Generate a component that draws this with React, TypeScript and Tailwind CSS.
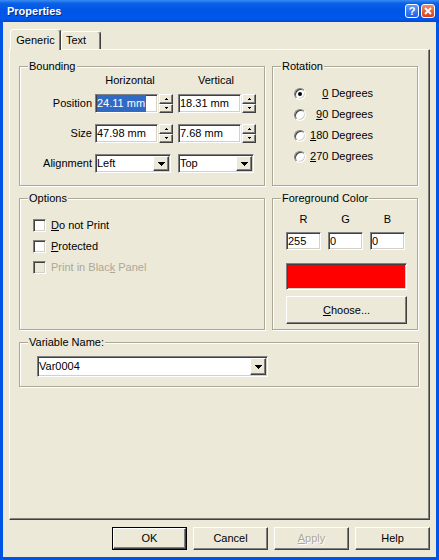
import type { ReactNode } from "react";

const raised =
	"border border-t-white border-l-white border-r-[#404040] border-b-[#404040] shadow-[inset_-1px_-1px_0_#808080]";
const sunken =
	"border border-t-[#808080] border-l-[#808080] border-r-white border-b-white shadow-[inset_1px_1px_0_#404040,inset_-1px_-1px_0_#d4d0c8]";

function Group({
	title,
	className,
	children,
}: {
	title: string;
	className: string;
	children: ReactNode;
}) {
	return (
		<div
			className={`flex flex-col border border-[#aca899] shadow-[1px_1px_0_#fff,inset_1px_1px_0_#fff] ${className}`}
		>
			<span className="-mt-[7px] ml-[8px] w-fit bg-[#ece9d8] px-[1px] leading-[13px]">
				{title}
			</span>
			{children}
		</div>
	);
}

function Arrow({ up }: { up?: boolean }) {
	return (
		<svg width="3" height="2" viewBox="0 0 3 2" shapeRendering="crispEdges">
			<path d={up ? "M1 0h1v1H1zM0 1h3v1H0z" : "M0 0h3v1H0zM1 1h1v1H1z"} fill="#000" />
		</svg>
	);
}

function DropArrow() {
	return (
		<svg width="7" height="4" viewBox="0 0 7 4" shapeRendering="crispEdges">
			<path d="M0 0h7v1H0zM1 1h5v1H1zM2 2h3v1H2zM3 3h1v1H3z" fill="#000" />
		</svg>
	);
}

function SpinField({ value, selected }: { value: string; selected?: boolean }) {
	return (
		<div className="flex h-full w-[78px]">
			<div className={`flex w-[63px] items-center bg-white pl-[1px] ${sunken}`}>
				<span className={selected ? "bg-[#316ac5] pr-[1px] text-white" : ""}>{value}</span>
			</div>
			<div className="ml-[1px] flex w-[14px] flex-col">
				<div className={`flex flex-1 items-center justify-center bg-[#ece9d8] ${raised}`}>
					<Arrow up />
				</div>
				<div className={`flex flex-1 items-center justify-center bg-[#ece9d8] ${raised}`}>
					<Arrow />
				</div>
			</div>
		</div>
	);
}

function Combo({ value, className }: { value: string; className: string }) {
	return (
		<div className={`flex bg-white p-[1px] ${sunken} ${className}`}>
			<span className="flex flex-1 items-center">{value}</span>
			<div className={`flex w-[16px] items-center justify-center bg-[#ece9d8] ${raised}`}>
				<DropArrow />
			</div>
		</div>
	);
}

function Radio({ checked, label }: { checked?: boolean; label: ReactNode }) {
	return (
		<div className="flex h-[21px] items-center">
			<div className={`flex size-[12px] items-center justify-center rounded-full bg-white ${sunken}`}>
				{checked && <div className="size-[4px] rounded-full bg-black" />}
			</div>
			<span className="w-[67px] text-right">{label}</span>
		</div>
	);
}

function Check({ label, disabled }: { label: ReactNode; disabled?: boolean }) {
	return (
		<div className="flex h-[21px] items-center">
			<div className={`size-[13px] ${disabled ? "bg-[#ece9d8]" : "bg-white"} ${sunken}`} />
			<span className={`ml-[5px] ${disabled ? "text-[#aca899]" : ""}`}>{label}</span>
		</div>
	);
}

function Button({ children, def, disabled }: { children: ReactNode; def?: boolean; disabled?: boolean }) {
	const inner = (
		<div
			className={`flex h-full w-full items-center justify-center bg-[#ece9d8] ${raised} ${
				disabled ? "text-[#aca899] [text-shadow:1px_1px_0_#fff]" : ""
			}`}
		>
			{children}
		</div>
	);
	return def ? (
		<div className="h-[23px] w-[75px] border border-black">{inner}</div>
	) : (
		<div className="h-[23px] w-[75px]">{inner}</div>
	);
}

export default function App() {
	return (
		<div className="flex h-[560px] w-[439px] flex-col bg-[#0054e3] font-['Liberation_Sans',Arial,sans-serif] text-[11px] text-black">
			{/* title bar */}
			<div className="flex h-[22px] items-center bg-[linear-gradient(to_bottom,#3b8df5_0%,#0a62e6_15%,#0055e5_45%,#0058ec_85%,#0049cf_100%)] pl-[7px] pr-[4px]">
				<span className="flex-1 text-[11px] font-bold text-white [text-shadow:1px_1px_0_#0a2a7a]">
					Properties
				</span>
				<div className="flex size-[14px] items-center justify-center rounded-[3px] border border-white bg-[linear-gradient(to_bottom,#5b9bff,#1e5fe6)] text-[11px] font-bold leading-none text-white">
					?
				</div>
				<div className="ml-[2px] flex size-[14px] items-center justify-center rounded-[3px] border border-white bg-[linear-gradient(to_bottom,#f08a6a,#d5401c)]">
					<svg width="8" height="8" viewBox="0 0 8 8">
						<path d="M1 1l6 6M7 1l-6 6" stroke="#fff" strokeWidth="1.8" />
					</svg>
				</div>
			</div>

			{/* dialog body */}
			<div className="mx-[3px] mb-[3px] flex flex-1 flex-col bg-[#ece9d8] px-[6px] pb-[7px] pt-[7px]">
				<div className="flex h-[20px] items-end pl-[1px]">
					<div className="relative z-10 -mb-[1px] flex h-[21px] w-[51px] items-center justify-center rounded-t-[3px] border-l border-t border-r border-l-white border-t-white border-r-[#404040] bg-[#ece9d8] shadow-[inset_-1px_0_0_#808080]">
						Generic
					</div>
					<div className="flex h-[18px] w-[40px] items-center rounded-t-[3px] border-l border-t border-r border-l-white border-t-white border-r-[#404040] pl-[4px] shadow-[inset_-1px_0_0_#808080]">
						Text
					</div>
				</div>

				<div className={`flex flex-1 flex-col pl-[9px] pt-[16px] ${raised}`}>
					<div className="flex">
						<Group title="Bounding" className="h-[120px] w-[246px]">
							<div className="mt-[1px] flex pl-[75px] leading-[13px]">
								<span className="w-[70px] text-center">Horizontal</span>
								<span className="ml-[16px] w-[70px] text-center">Vertical</span>
							</div>
							<div className="mt-[7px] flex flex-col gap-[11px]">
								<div className="flex h-[19px] items-center">
									<span className="w-[72px] text-right">Position</span>
									<div className="ml-[3px] flex h-full gap-[5px]">
										<SpinField value="24.11 mm" selected />
										<SpinField value="18.31 mm" />
									</div>
								</div>
								<div className="flex h-[19px] items-center">
									<span className="w-[72px] text-right">Size</span>
									<div className="ml-[3px] flex h-full gap-[5px]">
										<SpinField value="47.98 mm" />
										<SpinField value="7.68 mm" />
									</div>
								</div>
								<div className="flex h-[19px] items-center">
									<span className="w-[72px] text-right">Alignment</span>
									<div className="ml-[3px] flex h-full gap-[7px]">
										<Combo value="Left" className="w-[76px]" />
										<Combo value="Top" className="w-[76px]" />
									</div>
								</div>
							</div>
						</Group>

						<Group title="Rotation" className="ml-[7px] h-[120px] w-[146px]">
							<div className="mt-[10px] flex flex-col pl-[21px]">
								<Radio
									checked
									label={
										<>
											<u>0</u> Degrees
										</>
									}
								/>
								<Radio
									label={
										<>
											<u>9</u>0 Degrees
										</>
									}
								/>
								<Radio
									label={
										<>
											<u>1</u>80 Degrees
										</>
									}
								/>
								<Radio
									label={
										<>
											<u>2</u>70 Degrees
										</>
									}
								/>
							</div>
						</Group>
					</div>

					<div className="mt-[12px] flex">
						<Group title="Options" className="h-[132px] w-[246px]">
							<div className="mt-[10px] flex flex-col pl-[13px]">
								<Check
									label={
										<>
											<u>D</u>o not Print
										</>
									}
								/>
								<Check
									label={
										<>
											<u>P</u>rotected
										</>
									}
								/>
								<Check
									disabled
									label={
										<>
											Print in Blac<u>k</u> Panel
										</>
									}
								/>
							</div>
						</Group>

						<Group title="Foreground Color" className="ml-[7px] h-[132px] w-[146px]">
							<div className="flex flex-col pl-[13px]">
								<div className="mt-[8px] flex gap-[7px] leading-[13px]">
									<span className="w-[35px] text-center">R</span>
									<span className="w-[35px] text-center">G</span>
									<span className="w-[35px] text-center">B</span>
								</div>
								<div className="mt-[6px] flex h-[18px] gap-[7px]">
									<div className={`flex w-[35px] items-center bg-white pl-[1px] ${sunken}`}>255</div>
									<div className={`flex w-[35px] items-center bg-white pl-[1px] ${sunken}`}>0</div>
									<div className={`flex w-[35px] items-center bg-white pl-[1px] ${sunken}`}>0</div>
								</div>
								<div className={`mt-[13px] h-[27px] w-[121px] bg-[#ff0000] ${sunken}`} />
								<div className="mt-[6px] h-[28px] w-[121px]">
									<div className={`flex h-full items-center justify-center bg-[#ece9d8] ${raised}`}>
										<span>
											<u>C</u>hoose...
										</span>
									</div>
								</div>
							</div>
						</Group>
					</div>

					<Group title="Variable Name:" className="mt-[12px] h-[45px] w-[400px]">
						<Combo value="Var0004" className="ml-[17px] mt-[7px] h-[21px] w-[231px]" />
					</Group>
				</div>

				<div className="mt-[7px] flex justify-end gap-[6px]">
					<Button def>OK</Button>
					<Button>Cancel</Button>
					<Button disabled>
						<span>
							<u>A</u>pply
						</span>
					</Button>
					<Button>Help</Button>
				</div>
			</div>
		</div>
	);
}
